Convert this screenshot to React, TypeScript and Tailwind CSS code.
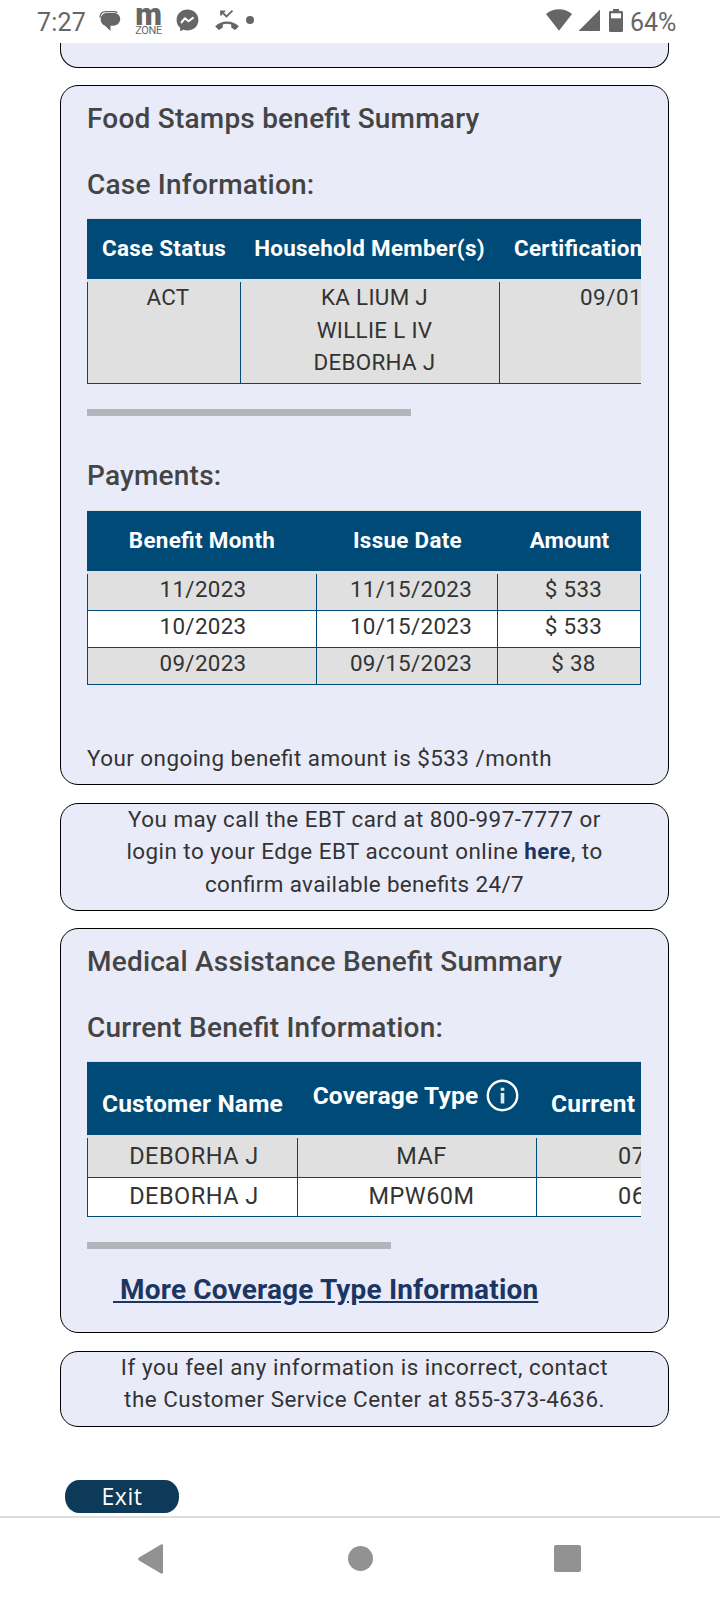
import type { ReactNode } from 'react';

const payments = [
  { month: '11/2023', issued: '11/15/2023', amount: '$ 533' },
  { month: '10/2023', issued: '10/15/2023', amount: '$ 533' },
  { month: '09/2023', issued: '09/15/2023', amount: '$ 38' },
];

const coverage = [
  { name: 'DEBORHA J', type: 'MAF', start: '07/01/2023' },
  { name: 'DEBORHA J', type: 'MPW60M', start: '06/01/2023' },
];

const household = ['KA LIUM J', 'WILLIE L IV', 'DEBORHA J'];

const th = 'border-t border-b-[3px] border-t-[#e0e0e0] border-b-[#e0e0e0] bg-[#004a78] p-0 font-bold text-white whitespace-nowrap';
const td = 'border-r border-b border-[#004a78] p-0 align-top text-center whitespace-nowrap';

function StatusBar() {
  return (
    <header className="flex h-[43px] shrink-0 items-start bg-white text-[#666666]">
      <span className="ml-[37px] mt-[8px] w-[50px] text-[25px] leading-[30px] tracking-[0.2px] whitespace-nowrap">7:27</span>

      {/* Messages */}
      <svg className="ml-[12px] mt-[10px] h-[22px] w-[22px]" viewBox="0 0 22 22">
        <path fill="none" stroke="currentColor" strokeWidth="1.300" strokeLinecap="round" d="M1 7C1.200 3.500 3.500 1.600 7 1.600H15c1 0 2 .2 3 .8" />
        <path fill="currentColor" d="M8 3h7c3.600 0 6.200 2.600 6.200 6.100 0 3.600-2.700 6.400-6.700 6.700H11.500V21l-5.500-5.200C3.400 14.600 1.600 12.200 1.600 9.400 1.600 5.700 4.300 3 8 3z" />
      </svg>

      {/* M Zone */}
      <div className="ml-[14px] mt-[7px] flex w-[27px] flex-col items-center">
        <span className="h-[18px] text-[31px] leading-[16px] font-black">m</span>
        <span className="text-[11px] leading-[12px] tracking-[-0.400px]">ZONE</span>
      </div>

      {/* Messenger */}
      <svg className="ml-[14px] mt-[9px] h-[23px] w-[23px]" viewBox="0 0 23 23">
        <path fill="currentColor" d="M11.500.5C5.300.5.6 5 .6 11c0 3.200 1.300 5.900 3.500 7.800l.1 3.400 3.100-1.400c1.300.4 2.700.6 4.200.6 6.200 0 10.900-4.500 10.900-10.400S17.700.5 11.500.5z" />
        <path fill="none" stroke="white" strokeWidth="2" strokeLinejoin="round" d="M5 14l4-4.800 3.600 3 5-3.800" />
      </svg>

      {/* Missed call */}
      <svg className="ml-[16px] mt-[9px] h-[22px] w-[24px]" viewBox="0 0 24 22">
        <path fill="none" stroke="currentColor" strokeWidth="1.800" d="M6 6.500V2.300h4.200M6.300 2.500l5.200 5 6-5.800" />
        <path fill="currentColor" d="M12 12.500c4.500 0 8.500 1.600 11.300 4.300.4.400.4.900 0 1.300l-2.600 2.500c-.4.400-.8.400-1.200.1-.9-.7-1.700-1.200-2.700-1.700-.4-.2-.6-.5-.6-1v-2.600c-2.800-.8-5.600-.8-8.400 0V18c0 .5-.2.800-.6 1-1 .5-1.800 1-2.700 1.700-.4.300-.8.300-1.200-.1L.7 18.100c-.4-.4-.4-.9 0-1.300C3.500 14.100 7.500 12.500 12 12.500z" />
      </svg>

      <span className="ml-[7px] mt-[16px] h-[8px] w-[8px] rounded-full bg-[#666666]" />

      {/* Wifi */}
      <svg className="ml-auto mt-[9px] h-[22px] w-[26px]" viewBox="0 0 26 22" fill="currentColor">
        <path d="M13 21.700L0 5C3.500 1.800 8 .2 13 .2S22.500 1.800 26 5z" />
      </svg>

      {/* Signal */}
      <svg className="ml-[6px] mt-[9px] h-[22px] w-[22px]" viewBox="0 0 22 22" fill="currentColor">
        <path d="M22 .5V22H.5z" />
      </svg>

      {/* Battery */}
      <svg className="ml-[9px] mt-[9px] h-[23px] w-[14px]" viewBox="0 0 14 23">
        <path fill="currentColor" d="M4 0h6v2h2.500c.9 0 1.500.6 1.500 1.500v18c0 .9-.6 1.500-1.500 1.500h-11C.6 23 0 22.400 0 21.500v-18C0 2.600.6 2 1.500 2H4z" />
        <path fill="white" d="M2 4.300h10v5H2z" />
      </svg>

      <span className="ml-[7px] mr-[43px] mt-[8px] w-[47px] text-[25px] leading-[30px] whitespace-nowrap">64%</span>
    </header>
  );
}

function Card({ className, children }: { className: string; children?: ReactNode }) {
  return (
    <section className={`shrink-0 overflow-hidden border border-black bg-[#e9ebf9] ${className}`}>{children}</section>
  );
}

function Heading({ className = '', children }: { className?: string; children: ReactNode }) {
  return (
    <h2 className={`text-[28px] leading-[40px] font-medium tracking-[0.22px] whitespace-nowrap text-[#444444] ${className}`}>
      {children}
    </h2>
  );
}

function CaseTable() {
  return (
    <div className="mt-[13px] w-[554px] overflow-hidden">
      <table className="w-[947px] table-fixed border-separate border-spacing-0 text-[22.400px] tracking-[0.3px]">
        <colgroup>
          <col className="w-[154px]" />
          <col className="w-[259px]" />
          <col />
        </colgroup>
        <thead>
          <tr className="h-[64px]">
            <th className={th}>Case Status</th>
            <th className={`${th} pr-[2px]`}>Household Member(s)</th>
            <th className={`${th} pl-[14px] text-left`}>Certification Period</th>
          </tr>
        </thead>
        <tbody className="bg-[#e0e0e0]">
          <tr className="h-[102px]">
            <td className={`${td} border-l pl-[8px] leading-[30px]`}>ACT</td>
            <td className={`${td} pl-[9px] leading-[32.500px]`}>
              <div className="-mt-px">
                {household.map((member) => (
                  <div key={member}>{member}</div>
                ))}
              </div>
            </td>
            <td className={`${td} pl-[80px] text-left leading-[30px] tracking-[0.5px]`}>09/01/2023</td>
          </tr>
        </tbody>
      </table>
    </div>
  );
}

function PaymentsTable() {
  return (
    <table className="mt-[14px] w-[554px] table-fixed border-separate border-spacing-0 text-[22.400px] tracking-[0.3px]">
      <colgroup>
        <col className="w-[230px]" />
        <col className="w-[181px]" />
        <col />
      </colgroup>
      <thead>
        <tr className="h-[64px]">
          <th className={th}>Benefit Month</th>
          <th className={th}>Issue Date</th>
          <th className={`${th} tracking-normal`}>Amount</th>
        </tr>
      </thead>
      <tbody className="leading-[30px]">
        {payments.map((row) => (
          <tr key={row.month} className="h-[37px] bg-white odd:bg-[#e0e0e0]">
            <td className={`${td} border-l pl-[2px]`}>{row.month}</td>
            <td className={`${td} pl-[8px]`}>{row.issued}</td>
            <td className={`${td} pl-[9px]`}>{row.amount}</td>
          </tr>
        ))}
      </tbody>
    </table>
  );
}

function CoverageTable() {
  return (
    <div className="mt-[13px] w-[554px] overflow-hidden">
      <table className="w-[1010px] table-fixed border-separate border-spacing-0 text-[23.500px]">
        <colgroup>
          <col className="w-[211px]" />
          <col className="w-[239px]" />
          <col />
        </colgroup>
        <thead className="text-[24.500px] tracking-[0.2px]">
          <tr className="h-[77px]">
            <th className={`${th} pt-[11px]`}>Customer Name</th>
            <th className={th}>
              <div className="flex items-center justify-center gap-[8px] pr-[3px] pb-[6px]">
                <span className="pt-[2px]">Coverage Type</span>
                <svg className="h-[33px] w-[33px]" viewBox="0 0 33 33">
                  <circle cx="16.500" cy="16.500" r="14.700" fill="none" stroke="white" strokeWidth="2.400" />
                  <path fill="#dfe8ee" d="M14.700 8.800h3.600v3h-3.600zM14.700 14h3.600v10.500h-3.600z" />
                </svg>
              </div>
            </th>
            <th className={`${th} pl-[14px] pt-[11px] text-left`}>Current Start</th>
          </tr>
        </thead>
        <tbody className="leading-[36px] tracking-[0.5px]">
          {coverage.map((row) => (
            <tr key={row.type} className="h-[39px] bg-white odd:h-[40px] odd:bg-[#e0e0e0]">
              <td className={`${td} border-l pl-[3px]`}>{row.name}</td>
              <td className={`${td} pl-[9px]`}>{row.type}</td>
              <td className={`${td} pl-[81px] text-left`}>{row.start}</td>
            </tr>
          ))}
        </tbody>
      </table>
    </div>
  );
}

function NavBar() {
  return (
    <nav className="flex h-[84px] shrink-0 items-start border-t-2 border-[#dddddd] bg-white text-[#929292]">
      <svg className="ml-[138px] mt-[26px] h-[30px] w-[26px]" viewBox="0 0 26 30" fill="currentColor">
        <path d="M1 13.600L23 .4c.9-.5 2 0 2 1v27.200c0 1-1.100 1.500-2 1L1 16.400c-1.100-.7-1.100-2.100 0-2.800z" />
      </svg>
      <span className="ml-[184px] mt-[28px] h-[25px] w-[25px] rounded-full bg-[#929292]" />
      <span className="ml-[181px] mt-[27px] h-[27px] w-[27px] rounded-[2px] bg-[#929292]" />
    </nav>
  );
}

export default function App() {
  return (
    <div className="flex h-[1600px] w-[720px] flex-col overflow-hidden bg-white font-[Roboto,sans-serif] text-[#333333] [font-feature-settings:'liga']">
      <StatusBar />

      <main className="flex min-h-0 flex-1 flex-col overflow-hidden pr-[51px] pl-[60px]">
        <Card className="h-[25px] rounded-b-[18px] border-t-0" />

        {/* Food stamps */}
        <Card className="mt-[17px] h-[700px] rounded-[18px] px-[26px] pt-[13px]">
          <Heading>Food Stamps benefit Summary</Heading>
          <Heading className="mt-[26px]">Case Information:</Heading>
          <CaseTable />
          <div className="mt-[25px] h-[7px] w-[324px] bg-[#b4b5bb]" />
          <Heading className="mt-[40px]">Payments:</Heading>
          <PaymentsTable />
          <p className="mt-[57px] text-[22.400px] leading-[32px] tracking-[0.47px]">Your ongoing benefit amount is $533 /month</p>
        </Card>

        <Card className="mt-[18px] h-[108px] rounded-[18px] text-center text-[22.400px] leading-[32.400px] tracking-[0.47px]">
          <p className="-mt-px whitespace-nowrap">
            You may call the EBT card at 800-997-7777 or
            <br />
            login to your Edge EBT account online <a className="font-bold text-[#1c3664]">here</a>, to
            <br />
            <span className="tracking-[0.38px]">confirm available benefits 24/7</span>
          </p>
        </Card>

        {/* Medical assistance */}
        <Card className="mt-[17px] h-[405px] rounded-[18px] px-[26px] pt-[13px]">
          <Heading>Medical Assistance Benefit Summary</Heading>
          <Heading className="mt-[26px]">Current Benefit Information:</Heading>
          <CoverageTable />
          <div className="mt-[25px] h-[7px] w-[304px] bg-[#b4b5bb]" />
          <a className="mt-[21px] ml-[26px] block text-[28px] leading-[40px] font-bold tracking-[0.16px] whitespace-pre text-[#1c3664] underline">
            {' More Coverage Type Information'}
          </a>
        </Card>

        <Card className="mt-[18px] h-[76px] rounded-[18px] text-center text-[22.400px] leading-[32.400px] tracking-[0.5px]">
          <p className="-mt-px whitespace-nowrap">
            <span className="tracking-[0.54px]">If you feel any information is incorrect, contact</span>
            <br />
            the Customer Service Center at 855-373-4636.
          </p>
        </Card>

        <button className="mt-[53px] ml-[5px] h-[33px] w-[114px] shrink-0 rounded-[14px/16px] bg-[#0c3a58] font-['Open_Sans',sans-serif] text-[23px] leading-[31px] tracking-[0.5px] text-white">
          Exit
        </button>
      </main>

      <NavBar />
    </div>
  );
}
